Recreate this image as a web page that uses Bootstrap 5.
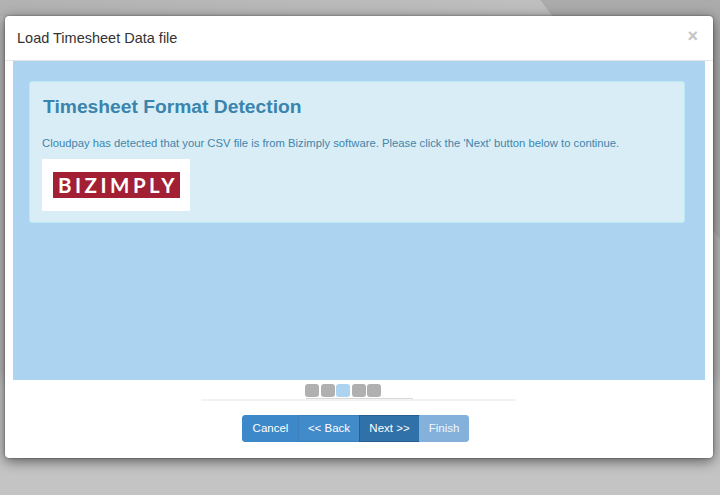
<!DOCTYPE html>
<html lang="en">
<head>
<meta charset="utf-8">
<title>Load Timesheet Data file</title>
<link href="https://cdn.jsdelivr.net/npm/bootstrap@5.3.0/dist/css/bootstrap.min.css" rel="stylesheet">
<style>
html,body{height:495px;overflow:hidden}
body{font-family:"Liberation Sans",Arial,sans-serif;font-size:12px;color:#333;padding:16px 7px 0 5px;
background:
 linear-gradient(53.13deg,transparent 576px,#ababab 576.5px) 0 0/100% 240px no-repeat,
 linear-gradient(90deg,#b2b2b2 0,#bfbfbf 76%) 0 0/100% 16px no-repeat,
 linear-gradient(180deg,#b8b8b8 0,#b8b8b8 372px,#c4c4c4 388px,#c4c4c4 100%)}
.dlg{height:442px;border:0;border-radius:4px;box-shadow:0 3px 13px rgba(0,0,0,.55),0 0 2px rgba(0,0,0,.5);overflow:hidden;background:#fff}
.dlg-head{height:45px;padding:0 12px;border-bottom:1px solid #e5e5e5}
.dlg-title{font-size:14.5px;line-height:1;color:#333;margin:0;font-weight:400}
.dlg-x{font-size:18px;line-height:1;font-weight:700;color:#c4c4c4;background:none;border:0;padding:0;margin-top:-5px;margin-right:3px}
.stage{background:#acd3f0;height:319px;margin:0 8px;padding:20px 20px 0 16px}
.notice{background:#d9edf7;border:1px solid #bce8f1;border-radius:3px;color:#31708f;height:142px;padding:0 12px;margin:0}
.notice-h{font-size:19.25px;font-weight:700;color:#3a84ad;line-height:1;margin:15px 0 0 1px}
.notice-p{font-size:11.28px;line-height:17px;margin:19px 0 7px 0;color:#4285a9}
.logo-box{width:148px;height:52px;background:#fff;padding-left:11px}
.logo-red{width:127px;height:26px;padding-left:3px;background:#a31f34;color:#fff;font-size:20.5px;font-weight:700;letter-spacing:3.5px;line-height:1;font-family:Lato,"Liberation Sans",sans-serif}
.steps{height:13px;margin-top:4px;gap:1.5px;padding-right:32px}
.stp{width:14px;height:13px;border-radius:3px;background:#b0b0b0}
.stp-on{background:#acd3f0}
.seg{height:1px;width:107px;background:#d8d8d8;margin:1px 0 0 301px}
.rule{height:2px;margin:0 197px 0 196px;background:#f2f2f2}
.wbar{margin-top:14px;padding-right:7px}
.wbtn{font-size:11.5px;line-height:17px;padding:4px 0;color:#fff;height:27px;--bs-btn-border-radius:3px}
.wb1{width:57px;background:#3c88c9;border-color:#3c88c9}
.wb2{width:62px;background:#428bca;border-color:#3a80bd}
.wb3{width:61px;background:#3071a9;border-color:#285e8e}
.wb4{width:50px;background:#83b1dc;border-color:#83b1dc;color:#f0f6fb}
</style>
</head>
<body>
<div class="dlg d-flex flex-column">
  <div class="dlg-head d-flex align-items-center justify-content-between">
    <h5 class="dlg-title">Load Timesheet Data file</h5>
    <button type="button" class="dlg-x" aria-label="Close">×</button>
  </div>
  <div class="stage">
    <div class="notice">
      <h3 class="notice-h">Timesheet Format Detection</h3>
      <p class="notice-p">Cloudpay has detected that your CSV file is from Bizimply software. Please click the 'Next' button below to continue.</p>
      <div class="logo-box d-flex align-items-center">
        <div class="logo-red d-flex align-items-center justify-content-center">BIZIMPLY</div>
      </div>
    </div>
  </div>
  <div class="steps d-flex justify-content-center">
    <span class="stp"></span><span class="stp"></span><span class="stp stp-on"></span><span class="stp"></span><span class="stp"></span>
  </div>
  <div class="seg"></div>
  <div class="rule"></div>
  <div class="wbar d-flex justify-content-center">
    <div class="btn-group" role="group">
      <button type="button" class="btn wbtn wb1">Cancel</button>
      <button type="button" class="btn wbtn wb2">&lt;&lt; Back</button>
      <button type="button" class="btn wbtn wb3">Next &gt;&gt;</button>
      <button type="button" class="btn wbtn wb4">Finish</button>
    </div>
  </div>
</div>
</body>
</html>
